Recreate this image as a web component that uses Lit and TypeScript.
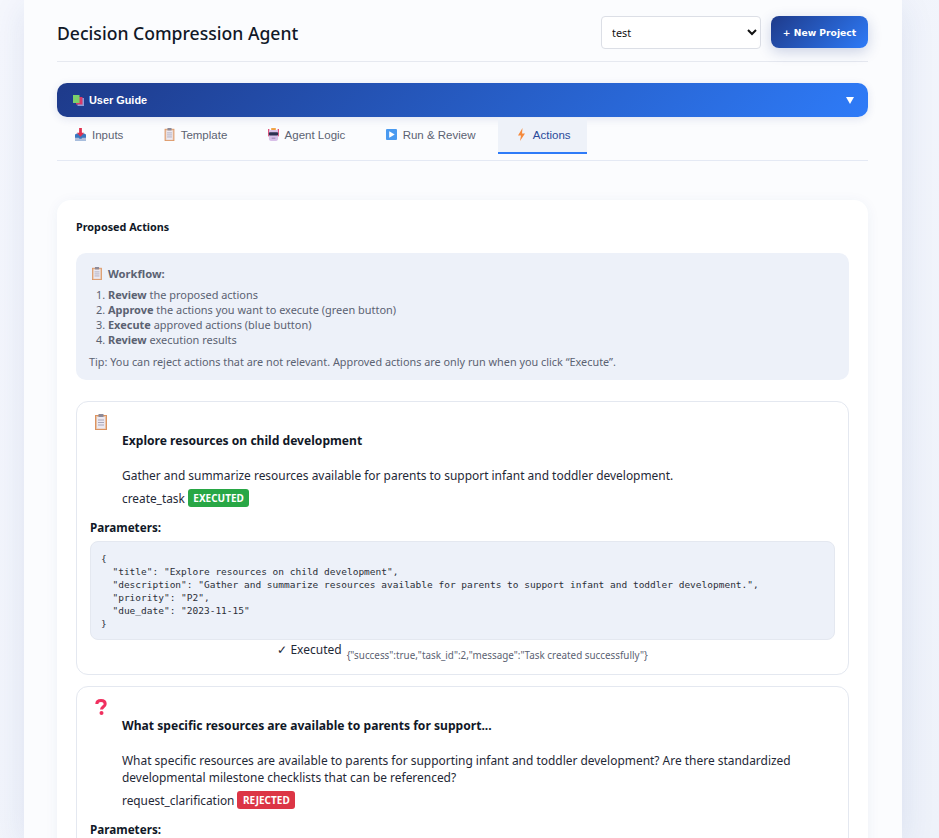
import { LitElement, html, css, svg } from 'lit';
import { customElement } from 'lit/decorators.js';

const clipboard = svg`<svg viewBox="0 0 12 16" class="ico">
  <rect x="0.500" y="1.500" width="11" height="14" fill="#e8c4a8" stroke="#dc9360"/>
  <rect x="2" y="3" width="8" height="11.500" fill="#ebe8f1"/>
  <rect x="3.500" y="0" width="5" height="3" fill="#8d8a98"/>
  <path d="M3 6h6M3 8.500h6M3 11h6" stroke="#a9a6b8" stroke-width="1"/>
</svg>`;

const inbox = svg`<svg viewBox="0 0 12 14" class="ico">
  <path d="M0 7l2-1h8l2 1v6.500H0z" fill="#3a78c0"/>
  <path d="M0 10.500h4l1 1h2l1-1h4v3H0z" fill="#b3bfdc"/>
  <path d="M4.500 0h3v5H10L6 9.500 2 5h2.500z" fill="#e0304f"/>
</svg>`;

const robot = svg`<svg viewBox="0 0 12 14" class="ico">
  <rect x="0" y="1" width="1.500" height="8" fill="#e0507a"/>
  <rect x="10.500" y="1" width="1.500" height="8" fill="#e0507a"/>
  <rect x="3.500" y="0" width="5" height="2.500" fill="#f0a040"/>
  <rect x="1" y="2" width="10" height="12" rx="2" fill="#d8bfe8"/>
  <rect x="1" y="4.500" width="10" height="3.500" rx="1" fill="#2c3050"/>
  <rect x="4" y="10.500" width="4" height="1" fill="#9a7fb0"/>
</svg>`;

const play = svg`<svg viewBox="0 0 12 12" class="ico">
  <rect x="0" y="0" width="12" height="12" rx="1" fill="#4a9af0"/>
  <path d="M3.500 2.500l6 3.500-6 3.500z" fill="#fff"/>
</svg>`;

const bolt = svg`<svg viewBox="0 0 8 13" class="ico">
  <path d="M5 0L.5 7.500h3L2.500 13l5-7.500H4.500z" fill="#f58a3c"/>
</svg>`;

const books = svg`<svg viewBox="0 0 11 11" class="ico">
  <rect x="4.500" y="3" width="6.500" height="8" fill="#8a9ad8"/>
  <rect x="3" y="2" width="6.500" height="7.500" fill="#d83a6a"/>
  <rect x="0" y="0" width="6.500" height="8" fill="#7cd06a"/>
</svg>`;

const question = svg`<svg viewBox="0 0 12 16" class="ico">
  <path d="M1.800 5C1.800 2.600 3.600 1.500 6 1.500s4.200 1.300 4.200 3.400c0 2.800-3.700 2.800-3.700 5.600" fill="none" stroke="#f0305f" stroke-width="3"/>
  <circle cx="6.500" cy="14" r="2" fill="#f0305f"/>
</svg>`;

const tabs = [
  { label: 'Inputs', icon: inbox },
  { label: 'Template', icon: clipboard },
  { label: 'Agent Logic', icon: robot },
  { label: 'Run & Review', icon: play },
  { label: 'Actions', icon: bolt },
];

const params1 = `{
  "title": "Explore resources on child development",
  "description": "Gather and summarize resources available for parents to support infant and toddler development.",
  "priority": "P2",
  "due_date": "2023-11-15"
}`;

@customElement('app-root')
export class AppRoot extends LitElement {
  static styles = css`
    :host {
      display: block;
      height: 838px;
      overflow: hidden;
      background: linear-gradient(135deg, #f5f7fd 0%, #eef2fa 100%);
      font-family: 'Noto Sans', 'Open Sans', sans-serif;
      color: #111827;
    }
    .container {
      width: 811px;
      margin-left: 24px;
      padding: 16px 34px 0 33px;
      height: 822px;
      background: #fbfcfe;
      box-shadow: 0 8px 32px rgba(30, 60, 140, 0.1);
    }
    .ico {
      display: block;
      flex: none;
    }
    .header {
      height: 45px;
      border-bottom: 1px solid #e6e9f0;
    }
    .header-inner {
      display: flex;
      align-items: center;
      justify-content: space-between;
      height: 33px;
    }
    h1 {
      margin: 0;
      font-size: 17.600px;
      font-weight: 500;
      color: #111827;
    }
    .header-right {
      display: flex;
      align-items: flex-start;
      gap: 10px;
    }
    select {
      width: 160px;
      height: 33px;
      padding: 0 6px;
      font-family: 'Noto Sans', sans-serif;
      font-size: 10.800px;
      color: #111;
      background: #fff;
      border: 1px solid #dcdfe6;
      border-radius: 4px;
    }
    .new-btn {
      width: 97px;
      height: 32px;
      padding: 0;
      font-family: 'DejaVu Sans', sans-serif;
      font-size: 9.200px;
      font-weight: 700;
      color: #fff;
      background: linear-gradient(135deg, #1e3a8a, #2e7bf8);
      border: none;
      border-radius: 8px;
      box-shadow: 0 4px 14px rgba(30, 58, 138, 0.22);
    }
    .guide {
      display: flex;
      align-items: center;
      justify-content: space-between;
      height: 34px;
      margin-top: 21px;
      padding: 0 14px 0 16px;
      background: linear-gradient(135deg, #1e3a8a, #2e7bf8);
      border-radius: 10px;
      box-shadow: 0 2px 8px rgba(30, 58, 138, 0.12);
      color: #fff;
    }
    .guide-title {
      display: flex;
      align-items: center;
      gap: 5px;
      font-family: 'Liberation Sans', Arial, sans-serif;
      font-size: 10.900px;
      font-weight: 700;
    }
    .guide-title .ico {
      width: 11px;
      height: 11px;
    }
    .arrow {
      width: 0;
      height: 0;
      border-left: 4px solid transparent;
      border-right: 4px solid transparent;
      border-top: 7px solid #fff;
    }
    .tabs {
      display: flex;
      gap: 5.300px;
      height: 44px;
      padding-top: 1px;
      box-sizing: border-box;
      border-bottom: 1px solid #e4e9f4;
      margin-bottom: 39px;
    }
    .tab {
      display: flex;
      align-items: center;
      gap: 6px;
      height: 36px;
      padding: 0 17px 1px 18px;
      box-sizing: border-box;
      border-bottom: 2px solid transparent;
      font-family: 'Liberation Sans', Arial, sans-serif;
      font-size: 11.500px;
      color: #5b6272;
    }
    .tab:last-child {
      padding-right: 16px;
    }
    .tab .ico {
      width: 11px;
      height: 13px;
    }
    .tab.active {
      color: #2a4a9a;
      background: #eef2f9;
      border-bottom-color: #2e7bf8;
    }
    .panel {
      padding: 19px 19px 0;
      background: #fff;
      border-radius: 14px;
      box-shadow: 0 2px 14px rgba(30, 60, 140, 0.06);
    }
    h2 {
      margin: 0 0 18px;
      font-size: 10.800px;
      line-height: 16px;
      font-weight: 700;
    }
    .workflow {
      padding: 10px 13px;
      background: #edf1f9;
      border-radius: 10px;
      font-size: 10.850px;
      color: #5b6272;
    }
    .workflow-title {
      display: flex;
      align-items: center;
      gap: 6px;
      height: 20px;
      font-size: 11.200px;
      font-weight: 700;
    }
    .workflow-title .ico {
      width: 10px;
      height: 13px;
      margin-left: 3px;
    }
    ol {
      margin: 4px 0 7px;
      padding-left: 19px;
      font-size: 10.950px;
      line-height: 15px;
    }
    .tip {
      line-height: 16px;
    }
    .action {
      height: 259.500px;
      margin-top: 21px;
      padding: 12px 13px 0;
      background: #fff;
      border: 1px solid #e4e8f0;
      border-radius: 12px;
    }
    .action + .action {
      margin-top: 11px;
    }
    .action-icon {
      display: block;
      width: 12px;
      height: 16px;
      margin-left: 5px;
    }
    .body {
      padding-left: 32px;
    }
    h3 {
      margin: 2px 0 18px;
      font-size: 12.100px;
      line-height: 17px;
      font-weight: 700;
    }
    .desc {
      margin: 0 0 5px;
      font-size: 11.950px;
      line-height: 17.300px;
      color: #1f2937;
    }
    .kind {
      display: flex;
      align-items: center;
      gap: 3px;
      font-size: 11.850px;
      line-height: 18px;
      color: #1f2937;
    }
    .badge {
      padding: 0 5.500px;
      height: 18px;
      line-height: 18px;
      font-size: 10px;
      font-weight: 700;
      color: #fff;
      border-radius: 3px;
    }
    .badge.ok {
      background: #28a745;
    }
    .badge.bad {
      background: #dc3545;
    }
    .params {
      margin-top: 11.500px;
      font-size: 11.700px;
      line-height: 17px;
      font-weight: 700;
    }
    pre {
      margin: 5px 0 0;
      padding: 10.500px 10px 8.500px;
      font-family: 'DejaVu Sans Mono', monospace;
      font-size: 9.500px;
      line-height: 13px;
      color: #2b2f38;
      background: #edf1f9;
      border: 1px solid #e4e8f0;
      border-radius: 8px;
    }
    .result {
      display: flex;
      justify-content: center;
      gap: 5px;
      margin-top: 1px;
      font-size: 12px;
      line-height: 18px;
      color: #1f2937;
    }
    .result small {
      align-self: flex-end;
      margin-bottom: -5px;
      font-size: 9.850px;
      color: #5b6272;
    }
  `;

  render() {
    return html`
      <div class="container">
        <div class="header">
          <div class="header-inner">
            <h1>Decision Compression Agent</h1>
            <div class="header-right">
              <select><option>test</option></select>
              <button class="new-btn">+ New Project</button>
            </div>
          </div>
        </div>
        <div class="guide">
          <div class="guide-title">${books}<span>User Guide</span></div>
          <div class="arrow"></div>
        </div>
        <div class="tabs">
          ${tabs.map(
            (t) => html`<div class="tab ${t.label === 'Actions' ? 'active' : ''}">
              ${t.icon}<span>${t.label}</span>
            </div>`
          )}
        </div>
        <div class="panel">
          <h2>Proposed Actions</h2>
          <div class="workflow">
            <div class="workflow-title">${clipboard}<span>Workflow:</span></div>
            <ol>
              <li><b>Review</b> the proposed actions</li>
              <li><b>Approve</b> the actions you want to execute (green button)</li>
              <li><b>Execute</b> approved actions (blue button)</li>
              <li><b>Review</b> execution results</li>
            </ol>
            <div class="tip">Tip: You can reject actions that are not relevant. Approved actions are only run when you click “Execute”.</div>
          </div>
          <div class="action">
            <span class="action-icon">${clipboard}</span>
            <div class="body">
              <h3>Explore resources on child development</h3>
              <p class="desc">Gather and summarize resources available for parents to support infant and toddler development.</p>
              <div class="kind">create_task <span class="badge ok">EXECUTED</span></div>
            </div>
            <div class="params">Parameters:</div>
            <pre>${params1}</pre>
            <div class="result">
              <span>✓ Executed</span>
              <small>{"success":true,"task_id":2,"message":"Task created successfully"}</small>
            </div>
          </div>
          <div class="action">
            <span class="action-icon">${question}</span>
            <div class="body">
              <h3>What specific resources are available to parents for support...</h3>
              <p class="desc">What specific resources are available to parents for supporting infant and toddler development? Are there standardized developmental milestone checklists that can be referenced?</p>
              <div class="kind">request_clarification <span class="badge bad">REJECTED</span></div>
            </div>
            <div class="params">Parameters:</div>
          </div>
        </div>
      </div>
    `;
  }
}
